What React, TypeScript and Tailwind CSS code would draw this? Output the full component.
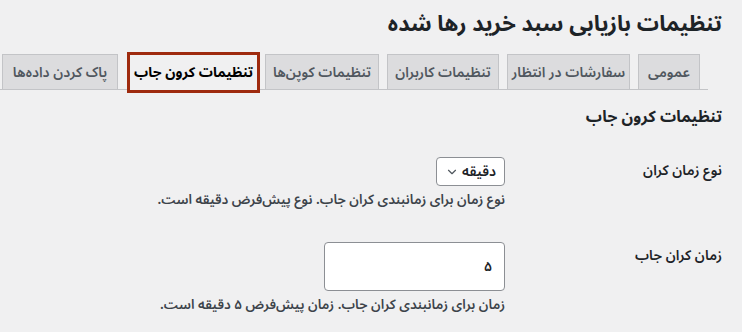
import { ChevronDown } from 'lucide-react';

const tabs = [
  { label: 'عمومی', w: 'w-[62px]' },
  { label: 'سفارشات در انتظار', w: 'w-[123px]' },
  { label: 'تنظیمات کاربران', w: 'w-[112px]' },
  { label: 'تنظیمات کوپن‌ها', w: 'w-[114px]' },
  { label: 'تنظیمات کرون جاب', w: 'w-[133px]', active: true },
  { label: 'پاک کردن داده‌ها', w: 'w-[116px]' },
];

export default function App() {
  return (
    <div
      dir="rtl"
      className="h-[332px] w-full overflow-hidden bg-[#f0f0f1] text-[#1d2327]"
      style={{ fontFamily: "'Noto Sans Arabic', 'DejaVu Sans', sans-serif" }}
    >
      <h1 className="mr-5 pt-[9px] text-[22px] font-bold leading-[30px]">تنظیمات بازیابی سبد خرید رها شده</h1>

      {/* tabs */}
      <nav className="mr-[34px] mt-[15px] flex h-[36px] items-start gap-[8px] border-b border-[#c3c4c7] pr-[8px]">
        {tabs.map((t) =>
          t.active ? (
            <div
              key={t.label}
              className={`${t.w} -mt-[2px] -mr-[3px] ml-[1px] flex h-[41px] shrink-0 items-center justify-center border-[3px] border-[#9e2a0e] bg-[#f0f0f1] text-[14px] font-bold whitespace-nowrap text-black`}
            >
              {t.label}
            </div>
          ) : (
            <div
              key={t.label}
              className={`${t.w} flex h-[36px] shrink-0 items-center justify-center border border-[#c3c4c7] bg-[#dcdcde] text-[14px] font-semibold whitespace-nowrap text-[#50575e]`}
            >
              {t.label}
            </div>
          ),
        )}
      </nav>

      <div className="mr-5">
        <h2 className="mt-[15px] text-[16px] font-bold leading-[24px]">تنظیمات کرون جاب</h2>

        {/* row 1 */}
        <div className="mt-[28px] flex">
          <div className="w-[217px] shrink-0 pt-[4px] text-[14px] font-semibold leading-[20px]">نوع زمان کران</div>
          <div>
            <div className="flex h-[29px] w-[69px] items-center justify-between rounded-[4px] border border-[#8c8f94] bg-white pr-[8px] pl-[8px] text-[14px] font-semibold">
              <span>دقیقه</span>
              <ChevronDown className="h-[14px] w-[14px] text-[#50575e]" strokeWidth={2} />
            </div>
            <p className="mt-[4px] text-[13.5px] font-semibold leading-[20px] text-[#3c434a]">
              نوع زمان برای زمانبندی کران جاب. نوع پیش‌فرض دقیقه است.
            </p>
          </div>
        </div>

        {/* row 2 */}
        <div className="mt-[32px] flex">
          <div className="w-[217px] shrink-0 pt-[4px] text-[14px] font-semibold leading-[20px]">زمان کران جاب</div>
          <div>
            <div className="flex h-[49px] w-[181px] items-center rounded-[4px] border border-[#8c8f94] bg-white pr-[12px] text-[14px] font-semibold">
              ۵
            </div>
            <p className="mt-[4px] text-[13.5px] font-semibold leading-[20px] text-[#3c434a]">
              زمان برای زمانبندی کران جاب. زمان پیش‌فرض ۵ دقیقه است.
            </p>
          </div>
        </div>
      </div>
    </div>
  );
}
